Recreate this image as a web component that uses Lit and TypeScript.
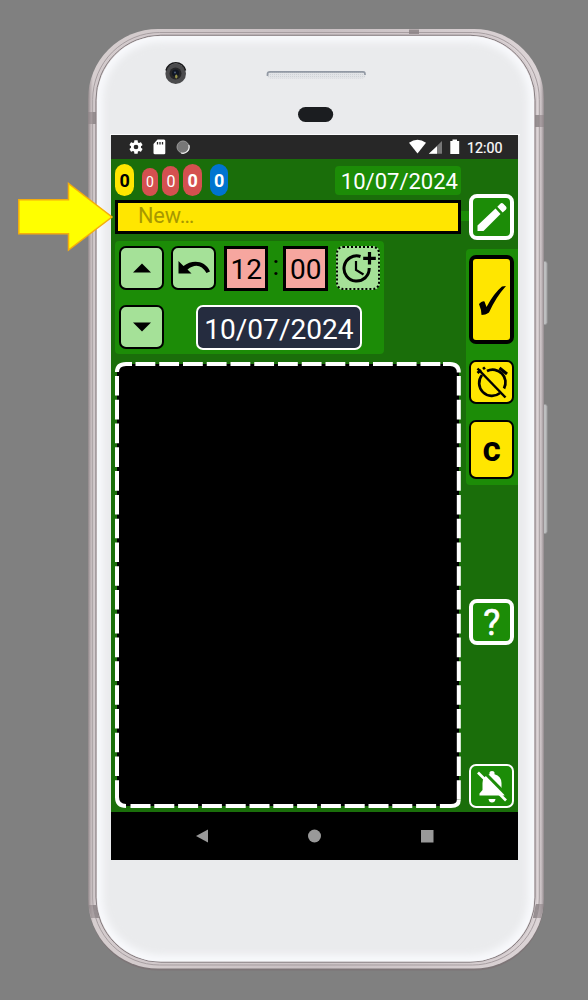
import { LitElement, html, css, svg } from "lit";
import { customElement } from "lit/decorators.js";

const dashes = svg`
  <rect x="2" y="2" width="342" height="442" rx="7" fill="#000"/>
  <g fill="none" stroke="#fff" stroke-width="4">
    <path d="M17 2H11Q2 2 2 10M328 2H335Q343.800 2 343.800 10.500M343.800 438Q343.800 444 336 444H325M2 420V435Q2 444 11 444"/>
    <path d="M20.500 2H333" stroke-dasharray="19.800 3.950"/>
    <path d="M15.500 444H334" stroke-dasharray="20 3.800"/>
    <path d="M2 14V436M343.800 14V438" stroke-dasharray="19.600 4.180"/>
  </g>`;

@customElement("phone-body")
export class PhoneBody extends LitElement {
  static styles = css`:host, svg { display: block; }`;
  render() {
    return html`<svg width="588" height="1000" viewBox="0 0 588 1000">
      <defs>
        <linearGradient id="rim" x1="0" x2="1" y1="0" y2="0">
          <stop offset="0" stop-color="#8f8789"/><stop offset=".005" stop-color="#b8aeb0"/>
          <stop offset=".011" stop-color="#d6cecf"/><stop offset=".5" stop-color="#c8bfc2"/>
          <stop offset=".989" stop-color="#dcd4d6"/><stop offset=".995" stop-color="#c0b7ba"/><stop offset="1" stop-color="#928a8d"/>
        </linearGradient>
        <filter id="soft" x="-5%" y="-5%" width="110%" height="110%"><feGaussianBlur stdDeviation="3.500"/></filter>
        <clipPath id="face"><rect x="97" y="36" width="437" height="925.500" rx="64"/></clipPath>
        <pattern id="mesh" width="2" height="2" patternUnits="userSpaceOnUse"><rect width="2" height="2" fill="#e2e4e7"/><rect width="1" height="1" fill="#cfd2d6"/></pattern>
      </defs>
      <g fill="#bdbfc0" stroke="#9c9c9e" stroke-width="1">
        <rect x="541.500" y="261.500" width="5.500" height="63" rx="2"/>
        <rect x="541.500" y="404.500" width="5.500" height="129" rx="2"/>
      </g>
      <rect x="88.500" y="31.500" width="455.500" height="939" rx="70" fill="#7d7577"/>
      <rect x="88" y="29" width="456" height="939.500" rx="70" fill="url(#rim)"/>
      <rect x="92.700" y="32.500" width="446.600" height="932.500" rx="67" fill="none" stroke="#a79ea1"/>
      <rect x="94.500" y="34" width="442" height="929" rx="66" fill="none" stroke="#d2c9cc" stroke-width="1"/>
      <rect x="95.900" y="35.200" width="439.200" height="927" rx="65" fill="none" stroke="#857d80" stroke-width="1"/>
      <g clip-path="url(#face)">
        <rect x="97" y="36" width="437" height="926" fill="#f8f9fc"/>
        <rect x="103" y="42" width="425" height="913" rx="58" fill="#eaebed" filter="url(#soft)"/>
      </g>
      <g fill="#8c8386" opacity=".85">
        <rect x="409" y="29.500" width="10" height="4.500"/>
        <path d="M88 112H96V124H88zM535 115H544V127H535zM88.500 905H96L99 918H91zM536 904H544L541 918H533z" opacity=".7"/>
        <path d="M93 112H96V124H93zM535 115H539V127H535zM93 905H96L99 918H96zM536 904H539L536 918H533z"/>
      </g>
      <circle cx="175.700" cy="73.700" r="10.300" fill="#4b4b4d"/>
      <path d="M166 70.500A10 10 0 0 1 185.500 70.500" fill="none" stroke="#18181a" stroke-width="1.500"/>
      <circle cx="175.500" cy="73.500" r="6" fill="#252527"/>
      <circle cx="175.500" cy="73" r="3.500" fill="#111723"/>
      <circle cx="175" cy="72.500" r="1" fill="#4c5b78"/><ellipse cx="176.300" cy="76.500" rx="1.200" ry="2" fill="#99964a"/>
      <rect x="267" y="71" width="98.500" height="7.500" rx="3.500" fill="url(#mesh)"/>
      <path d="M267.500 76V74Q267.500 71.800 270 71.800H363Q365 71.800 365 74V75" fill="none" stroke="#9299a4" stroke-width="1.700"/>
      <rect x="298" y="107" width="35.200" height="15" rx="7.500" fill="#1b1d20"/>
      <rect x="110" y="134" width="410" height="1.500" fill="#fbfbfc"/>
    </svg>`;
  }
}

@customElement("app-root")
export class AppRoot extends LitElement {
  static styles = css`
    * { box-sizing: border-box; }
    :host { display: block; width: 588px; height: 1000px; background: #808080; position: relative; overflow: hidden; font-family: Roboto, "Liberation Sans", sans-serif; }
    svg { display: block; }
    .backdrop { position: absolute; inset: 0; }
    .arrow { position: absolute; left: 16px; top: 178px; }
    .screen { position: relative; width: 407px; height: 725px; margin: 135px 0 0 111.400px; display: flex; flex-direction: column; background: #1a6e0a; float: left; }
    .status { height: 24px; background: #272727; color: #fff; display: flex; align-items: center; justify-content: space-between; padding: 0 16px 0 17px; flex: none; }
    .group { display: flex; align-items: center; }
    .sd { margin-left: 9px; }
    .sync { margin-left: 10px; }
    .clock { font-size: 14.200px; font-weight: 400; line-height: 24px; padding-top: 2px; margin-left: 7px; -webkit-text-stroke: .2px #fff; }
    .main { flex: 1; display: flex; min-height: 0; }
    .left { width: 354.500px; padding: 4px 4.500px 4px 4px; display: flex; flex-direction: column; }
    .top { height: 37px; display: flex; justify-content: space-between; }
    .badges { display: flex; align-items: flex-end; height: 32.500px; }
    .badge { border-radius: 10px; color: #fff; display: flex; justify-content: center; align-items: center; background: #d45050; padding-top: 1px; }
    .b1 { background: #ffe600; color: #000; width: 18.500px; height: 32px; font-size: 18px; font-weight: 700; margin-right: 8px; }
    .b2 { width: 16px; height: 27.500px; font-size: 14px; margin-right: 4.500px; }
    .b3 { width: 17px; height: 30px; font-size: 16px; margin-right: 4px; }
    .b4 { width: 18.500px; height: 32px; font-size: 18px; font-weight: 700; margin-right: 8px; }
    .b5 { width: 18.500px; height: 32px; font-size: 18px; font-weight: 700; background: #0074d0; }
    .today { width: 126px; height: 29px; margin-top: 3px; border-radius: 4px; background: #1c8c07; color: #fff; font-size: 22px; line-height: 32px; text-align: center; padding-left: 2px; }
    .entry { height: 33.500px; border: 3px solid #000; background: #ffe600; color: #a79800; font-size: 21.700px; line-height: 26px; padding-left: 19.500px; flex: none; }
    .panel { width: 269px; height: 113px; margin: 7.500px 0 8px; background: #1c8c07; border-radius: 4px; display: flex; flex-direction: column; justify-content: space-between; padding: 4.500px 4px; flex: none; }
    .row { display: flex; align-items: center; }
    .btn { width: 44.500px; height: 44.500px; border-radius: 7px; border: 2px solid #000; display: flex; align-items: center; justify-content: center; flex: none; }
    .mint { background: #a5e198; }
    .undo { margin: 0 8px 0 7.500px; }
    .time { width: 44.500px; height: 45px; background: #f6a69f; border: 3px solid #000; font-size: 28px; line-height: 42px; text-align: center; flex: none; }
    .colon { width: 15px; text-align: center; font-size: 28px; line-height: 40px; height: 44px; }
    .later { margin-left: 8px; border: 2px dotted #000; }
    .date { width: 166px; height: 45px; margin-left: 32px; border: 2px solid #fff; border-radius: 7px; background: #252c3f; color: #fff; font-size: 28.100px; line-height: 45px; text-align: center; }
    .side { width: 52.500px; display: flex; flex-direction: column; padding-top: 35px; }
    .side .btn { margin-left: 3.500px; }
    .green { background: #1c8c07; border-color: #fff; }
    .side .thick { border-width: 4px; height: 45.500px; border-radius: 8px; }
    .edit { position: relative; }
    .link { position: absolute; right: 41px; top: 13px; width: 8px; height: 10px; background: #1c8c07; }
    .actions { height: 236px; margin-top: 9.500px; background: #1c8c07; border-radius: 4px 0 0 4px; padding: 5.500px 0; display: flex; flex-direction: column; }
    .yellow { background: #ffe600; }
    .side .check { height: 89.500px; border-width: 4px; margin-bottom: 15.500px; padding-top: 2px; }
    .side .clear { height: 59.500px; margin-top: 15.500px; font-size: 35px; font-weight: 700; padding-top: 1px; }
    .help { margin-top: 114px; }
    .mute { margin-top: 119px; }
    .mark { color: #fff; font-size: 36px; font-weight: 400; line-height: 36px; padding-top: 3px; -webkit-text-stroke: .6px #fff; }
    .nav { height: 48px; background: #000; flex: none; display: flex; align-items: center; padding-left: 83.500px; }
  `;

  render() {
    return html`
      <phone-body class="backdrop"></phone-body>
      <div class="screen">
        <div class="status">
          <div class="group">
            <svg width="16" height="16" viewBox="0 0 24 24" fill="#fff"><path d="M19.430 12.980c.04-.32.070-.64.070-.98s-.03-.66-.07-.98l2.110-1.650c.19-.15.24-.42.120-.64l-2-3.460c-.12-.22-.39-.3-.61-.22l-2.490 1c-.52-.4-1.080-.73-1.690-.98l-.38-2.650C14.460 2.180 14.250 2 14 2h-4c-.25 0-.46.180-.49.420l-.38 2.650c-.61.250-1.170.59-1.690.98l-2.490-1c-.23-.09-.49 0-.61.220l-2 3.460c-.13.220-.07.490.120.640l2.110 1.650c-.04.320-.07.650-.07.980s.03.660.070.980l-2.110 1.650c-.19.150-.24.420-.12.640l2 3.460c.12.220.39.300.61.220l2.490-1c.52.400 1.080.730 1.690.980l.38 2.650c.03.240.24.420.490.420h4c.25 0 .46-.18.490-.42l.38-2.650c.61-.25 1.170-.59 1.690-.98l2.490 1c.23.090.49 0 .61-.22l2-3.460c.12-.22.070-.49-.12-.64zM12 15.500A3.500 3.500 0 1 1 12 8.500a3.500 3.500 0 0 1 0 7z"/></svg>
            <svg class="sd" width="13" height="16" viewBox="0 0 13 16"><path d="M4.500 .5H11Q12.300.5 12.300 2V14Q12.300 15.300 11 15.300H2Q.5 15.300.5 14V5z" fill="#fff"/><path d="M4.500 3V5.500M7 3V5.500M9.500 3V5.500" stroke="#272727" stroke-width="1.300"/></svg>
            <svg class="sync" width="14" height="14" viewBox="0 0 14 14"><circle cx="7" cy="7" r="6" fill="#777" stroke="#999"/><path d="M12.800 5A6.300 6.300 0 0 1 5 13" fill="none" stroke="#f0f0f0" stroke-width="1.200"/></svg>
          </div>
          <div class="group">
            <svg width="51" height="16" viewBox="0 0 51 16"><path d="M0 3.700Q8.500 -2 17 3.700L8.500 14.500z" fill="#fff"/><path d="M19.800 14.800L33 2V14.800z" fill="#777"/><path d="M19.800 14.800L28 7.200V14.800z" fill="#fff"/><path d="M43.500 .5h4.500v1.500h2.200V15H41.300V2h2.200z" fill="#fff"/></svg>
            <span class="clock">12:00</span>
          </div>
        </div>
        <div class="main">
          <div class="left">
            <div class="top">
              <div class="badges">
                <span class="badge b1">0</span><span class="badge b2">0</span><span class="badge b3">0</span><span class="badge b4">0</span><span class="badge b5">0</span>
              </div>
              <div class="today">10/07/2024</div>
            </div>
            <div class="entry">New…</div>
            <div class="panel">
              <div class="row">
                <div class="btn mint"><svg width="20" height="10"><path d="M1 9.500L10 .5L19 9.500z"/></svg></div>
                <div class="btn mint undo"><svg width="34" height="18" viewBox="0 0 34 18"><path d="M1.500 2V14.500H14.500L10.500 10.500Q22 1.500 29.500 14L33 12.500C28 1 15 .5 6.500 7z"/></svg></div>
                <div class="time">12</div><div class="colon">:</div><div class="time">00</div>
                <div class="btn mint later"><svg width="38" height="38" viewBox="0 0 38 38" fill="none" stroke="#000"><path d="M21.500 7.500A12.600 12.600 0 1 0 30.200 19" stroke-width="3"/><path d="M17 12V21L24.500 25.500" stroke-width="2.200"/><path d="M30.500 3V15.500M24.200 9.300H36.800" stroke-width="3.200"/></svg></div>
              </div>
              <div class="row">
                <div class="btn mint"><svg width="20" height="10"><path d="M1 .5L10 9.500L19 .5z"/></svg></div>
                <div class="date">10/07/2024</div>
              </div>
            </div>
            <svg width="347" height="446" viewBox="0 0 347 446">${dashes}</svg>
          </div>
          <div class="side">
            <div class="btn green thick edit"><span class="link"></span><svg width="32" height="32" viewBox="0 0 32 32" fill="#fff"><path d="M1.500 24.500L19.500 7.500L24.500 13L7.500 30H1.500zM21.300 5.700L24.300 2.700Q25.800 1.300 27.300 2.700L30 5.500Q31.300 7 30 8.500L26.700 11.500z"/></svg></div>
            <div class="actions">
              <div class="btn yellow check"><svg width="30" height="34" viewBox="0 0 30 34"><path d="M2 21Q5 17.500 7.500 18.500L9.500 24Q17 10 25 3.500L29 3Q19 14 12 29.500Q9 32 4.500 32Q4.500 27 2 21z"/></svg></div>
              <div class="btn yellow"><svg width="36" height="36" viewBox="0 0 36 36" fill="none" stroke="#000"><path d="M13 7A12.800 12.800 0 0 1 30 24.500M26 29A12.800 12.800 0 0 1 8 11" stroke-width="2.700"/><path d="M3.500 4.500L31.500 33.500" stroke-width="2.500"/><path d="M25.500 4L33 10" stroke-width="3"/><path d="M3.500 9L7 6M9 5L11 3.500" stroke-width="2.800"/></svg></div>
              <div class="btn yellow clear">c</div>
            </div>
            <div class="btn green thick help"><span class="mark">?</span></div>
            <div class="btn green mute"><svg width="34" height="36" viewBox="0 0 34 36"><path d="M4.500 27.500V25.500L7.500 22V15Q7.500 8.500 14.500 6.300V4.500Q14.500 3 17 3Q19.500 3 19.500 4.500V6.300Q26.500 8.500 26.500 15V22L29.500 25.500V27.500zM13.500 31H20.500Q20 34.500 17 34.500Q14 34.500 13.500 31z" fill="#fff"/><path d="M6 1L34 29.500" stroke="#1c8c07" stroke-width="3"/><path d="M3 4.500L31 32.500" stroke="#fff" stroke-width="2.700"/></svg></div>
          </div>
        </div>
        <div class="nav"><svg width="240" height="20" fill="#999"><path d="M1 10L13 3.500V16.500z"/><circle cx="119.500" cy="10" r="6.500"/><rect x="226" y="4" width="12.500" height="12.500"/></svg></div>
      </div>
      <svg class="arrow" width="100" height="80" viewBox="0 0 100 80"><path d="M2.800 21.800H52.500V5.500L96 39L52.500 72V55.800H2.800z" fill="#ff0" stroke="#f5ad0c" stroke-width="1.500"/></svg>
    `;
  }
}
